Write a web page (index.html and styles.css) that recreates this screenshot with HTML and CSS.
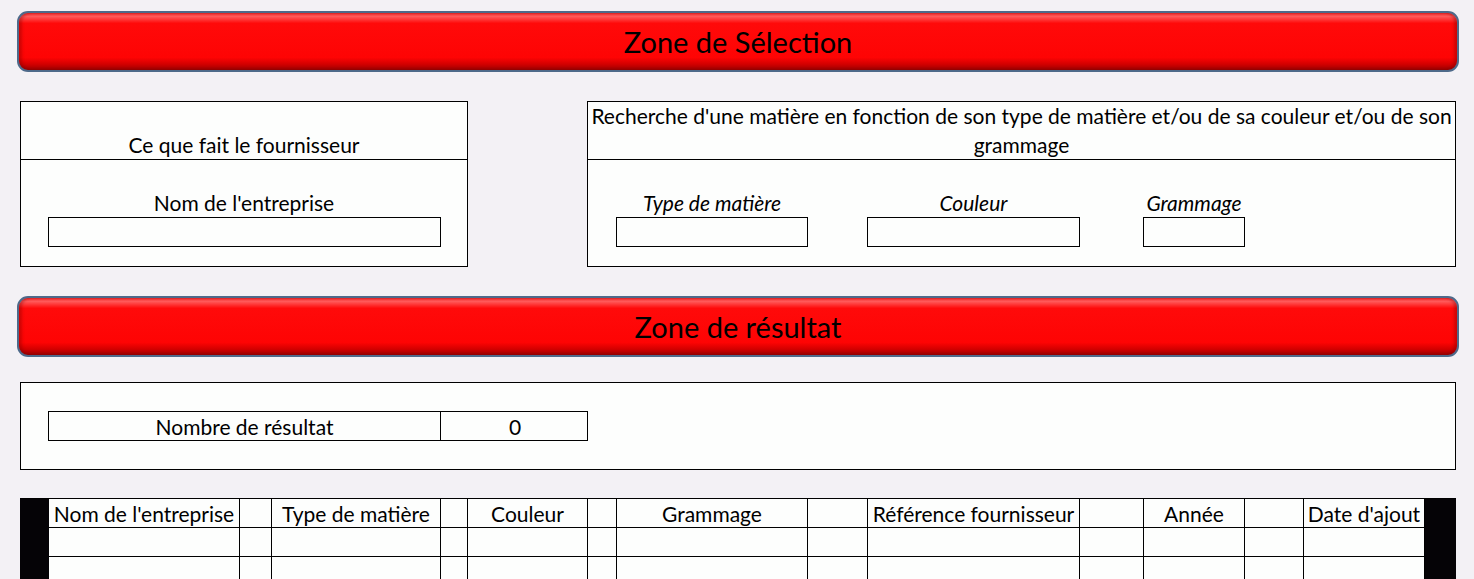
FILE: index.html
```html
<!DOCTYPE html>
<html lang="fr">
<head>
    <meta charset="UTF-8">
    <title>Recherche fournisseur</title>
    <link rel="stylesheet" href="styles.css">
</head>
<body>
    <div class="sheet">
        <div class="banner">Zone de Sélection</div>

        <div class="panels">
            <div class="box box-supplier">
                <div class="box-head">
                    <span>Ce que fait le fournisseur</span>
                </div>
                <div class="box-body">
                    <div class="label">Nom de l'entreprise</div>
                    <div class="field field-company"></div>
                </div>
            </div>

            <div class="box box-search">
                <div class="box-head">
                    <span>Recherche d'une matière en fonction de son type de matière et/ou de sa couleur et/ou de son<br>grammage</span>
                </div>
                <div class="box-body search-fields">
                    <div class="search-item item-type">
                        <div class="label italic">Type de matière</div>
                        <div class="field"></div>
                    </div>
                    <div class="search-item item-color">
                        <div class="label italic">Couleur</div>
                        <div class="field"></div>
                    </div>
                    <div class="search-item item-weight">
                        <div class="label italic">Grammage</div>
                        <div class="field"></div>
                    </div>
                </div>
            </div>
        </div>

        <div class="banner banner-result">Zone de résultat</div>

        <div class="box box-count">
            <div class="count">
                <div class="count-label">Nombre de résultat</div>
                <div class="count-value">0</div>
            </div>
        </div>

        <!-- Result grid: black margin columns on each side, spacer columns in between -->
        <div class="results">
            <div class="cell edge"></div>
            <div class="cell th">Nom de l'entreprise</div>
            <div class="cell"></div>
            <div class="cell th">Type de matière</div>
            <div class="cell"></div>
            <div class="cell th">Couleur</div>
            <div class="cell"></div>
            <div class="cell th">Grammage</div>
            <div class="cell"></div>
            <div class="cell th">Référence fournisseur</div>
            <div class="cell"></div>
            <div class="cell th">Année</div>
            <div class="cell"></div>
            <div class="cell th">Date d'ajout</div>
            <div class="cell edge"></div>

            <div class="cell edge"></div>
            <div class="cell"></div><div class="cell"></div><div class="cell"></div><div class="cell"></div>
            <div class="cell"></div><div class="cell"></div><div class="cell"></div><div class="cell"></div>
            <div class="cell"></div><div class="cell"></div><div class="cell"></div><div class="cell"></div>
            <div class="cell"></div>
            <div class="cell edge"></div>

            <div class="cell edge"></div>
            <div class="cell"></div><div class="cell"></div><div class="cell"></div><div class="cell"></div>
            <div class="cell"></div><div class="cell"></div><div class="cell"></div><div class="cell"></div>
            <div class="cell"></div><div class="cell"></div><div class="cell"></div><div class="cell"></div>
            <div class="cell"></div>
            <div class="cell edge"></div>
        </div>
    </div>
</body>
</html>
```

FILE: styles.css
```css
* {
    box-sizing: border-box;
    margin: 0;
    padding: 0;
}

html, body {
    height: 100%;
    overflow: hidden;
}

body {
    background: #f3f1f5;
    font-family: 'Lato', 'Liberation Sans', sans-serif;
    font-size: 21px;
    line-height: 29px;
    color: #000;
}

.sheet {
    width: 1442px;
    padding-top: 11px;
    margin-left: 17px;
}

/* Red rounded header bars */
.banner {
    height: 61px;
    border: 2px solid #4e6a8a;
    border-radius: 11px;
    background: linear-gradient(#ff3030 0, #ff5a5a 6%, #ff0a0a 18%, #fe0404 78%, #d20000 90%, #9c0000 100%);
    box-shadow: inset 3px 0 3px rgba(120, 0, 0, 0.35), inset -3px 0 3px rgba(120, 0, 0, 0.35);
    display: flex;
    justify-content: center;
    align-items: center;
    font-size: 29px;
}

.banner-result {
    margin-top: 29px;
}

.box {
    background: #fdfefd;
    border: 1px solid #000;
    margin-left: 3px;
}

.panels {
    display: flex;
    margin-top: 29px;
}

.box-supplier {
    width: 448px;
    height: 166px;
}

.box-search {
    width: 869px;
    height: 166px;
    margin-left: 119px;
}

.box-head {
    height: 58px;
    border-bottom: 1px solid #000;
    display: flex;
    justify-content: center;
    align-items: flex-end;
    text-align: center;
}

.box-body {
    padding-top: 28px;
}

.label {
    text-align: center;
    white-space: nowrap;
}

.italic {
    font-style: italic;
}

.field {
    height: 30px;
    border: 1px solid #000;
    background: #fdfefd;
}

.field-company {
    width: 393px;
    margin-left: 27px;
}

.search-fields {
    display: flex;
    padding-left: 28px;
}

.item-type { width: 192px; }
.item-color { width: 213px; margin-left: 59px; }
.item-weight { width: 102px; margin-left: 63px; }

.box-count {
    width: 1436px;
    height: 88px;
    margin-top: 25px;
    padding: 28px 0 0 27px;
}

.count {
    display: grid;
    grid-template-columns: 392px 148px;
    width: 540px;
    height: 30px;
    border: 1px solid #000;
    text-align: center;
}

.count-label {
    border-right: 1px solid #000;
}

.results {
    display: grid;
    grid-template-columns: 29px 191px 32px 169px 27px 120px 29px 191px 60px 212px 64px 101px 59px 121px 31px;
    grid-auto-rows: 29px;
    width: 1436px;
    margin: 28px 0 0 3px;
    border-top: 1px solid #000;
    background: #fdfefd;
}

.cell {
    border-right: 1px solid #000;
    border-bottom: 1px solid #000;
    white-space: nowrap;
    overflow: hidden;
}

.th {
    text-align: center;
}

.edge {
    background: #050306;
    border-color: #050306;
}
```
